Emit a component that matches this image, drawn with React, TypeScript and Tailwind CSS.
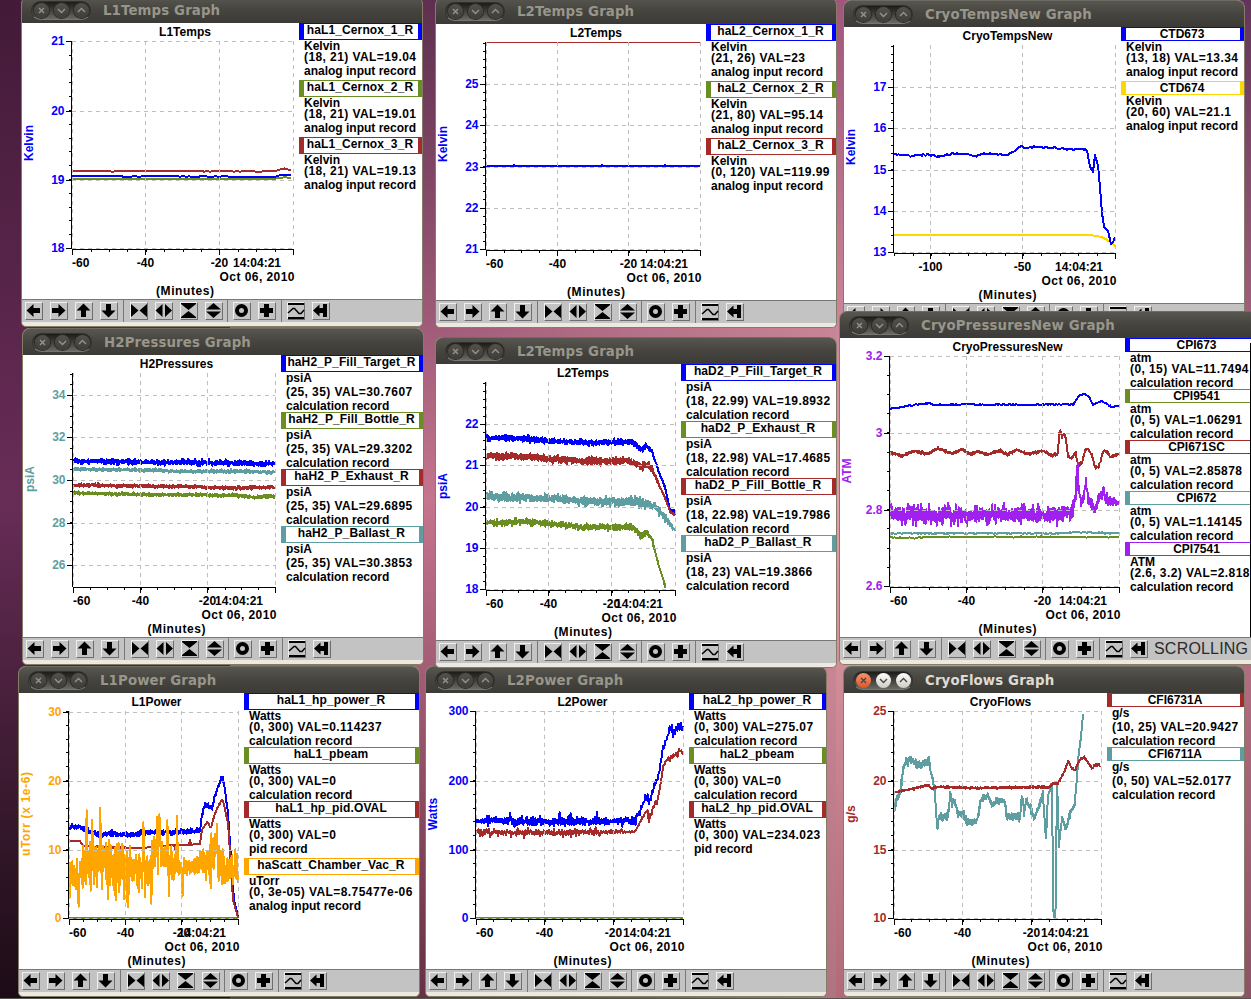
import React from "react";
import clsx from "clsx";

type Point = [number, number, number?];

type Series = {
  color: string;
  noise?: number;
  step?: number;
  width?: number;
  points: Point[];
  spikes?: [number, number][];
};

type Record_ = { name: string; color: string; unit: string; value: string; kind: string };

type GraphWindow = {
  title: string;
  name: string;
  x: number;
  y: number;
  width: number;
  height: number;
  active?: boolean;
  status?: string;
  legendX: number;
  center: number;
  axis: { left: number; right: number; top: number; bottom: number };
  yColor: string;
  yLabel: string;
  yLabelAt: number;
  yLabelLength?: number;
  yMinor: number;
  yTicks: [number, string][];
  xMinor: number;
  xTicks: [number, string][];
  records: Record_[];
  series: Series[];
};

const BLUE = "#0000ff";
const GREEN = "#6b8e23";
const RED = "#a52a2a";
const TEAL = "#5f9ea0";
const PURPLE = "#a020f0";
const ORANGE = "#ffa500";
const GOLD = "#ffd700";

const CALC = "calculation record";
const ANALOG = "analog input record";

const windows: GraphWindow[] = [
  {
    title: "L1Temps Graph",
    name: "L1Temps",
    x: 22, y: 23, width: 400, height: 276,
    legendX: 299,
    center: 185,
    axis: { left: 72, right: 293, top: 41, bottom: 249 },
    yColor: BLUE, yLabel: "Kelvin", yLabelAt: 143,
    yMinor: 13.8,
    yTicks: [[41, "21"], [111, "20"], [180, "19"], [248, "18"]],
    xMinor: 18.4,
    xTicks: [[72, "-60"], [145, "-40"], [219, "-20"]],
    records: [
      { name: "haL1_Cernox_1_R", color: BLUE, unit: "Kelvin", value: "(18, 21) VAL=19.04", kind: ANALOG },
      { name: "haL1_Cernox_2_R", color: GREEN, unit: "Kelvin", value: "(18, 21) VAL=19.01", kind: ANALOG },
      { name: "haL1_Cernox_3_R", color: RED, unit: "Kelvin", value: "(18, 21) VAL=19.13", kind: ANALOG },
    ],
    series: [
      { color: RED, noise: 0.5, step: 3, points: [[72, 171], [274, 171.3], [284, 168.8], [293, 170]] },
      { color: GREEN, noise: 0.2, step: 3, points: [[72, 179], [274, 179], [284, 177], [293, 178]] },
      { color: BLUE, noise: 0.4, step: 3, points: [[72, 176], [145, 176.3], [274, 177], [284, 174.5], [293, 175.7]] },
    ],
  },
  {
    title: "L2Temps Graph",
    name: "L2Temps",
    x: 436, y: 24, width: 400, height: 276,
    legendX: 706,
    center: 596,
    axis: { left: 486, right: 700, top: 42, bottom: 250 },
    yColor: BLUE, yLabel: "Kelvin", yLabelAt: 144,
    yMinor: 8.26,
    yTicks: [[84, "25"], [125, "24"], [167, "23"], [208, "22"], [249, "21"]],
    xMinor: 17.85,
    xTicks: [[486, "-60"], [557, "-40"], [628, "-20"]],
    records: [
      { name: "haL2_Cernox_1_R", color: BLUE, unit: "Kelvin", value: "(21, 26) VAL=23", kind: ANALOG },
      { name: "haL2_Cernox_2_R", color: GREEN, unit: "Kelvin", value: "(21, 80) VAL=95.14", kind: ANALOG },
      { name: "haL2_Cernox_3_R", color: RED, unit: "Kelvin", value: "(0, 120) VAL=119.99", kind: ANALOG },
    ],
    series: [
      { color: RED, width: 1, points: [[486, 42.5], [700, 42.5]] },
      { color: BLUE, points: [[486, 166], [513, 166], [514, 165], [515, 166], [601, 166], [602, 165], [603, 166], [664, 166], [665, 165], [666, 166], [700, 166]] },
    ],
  },
  {
    title: "CryoTempsNew Graph",
    name: "CryoTempsNew",
    x: 844, y: 27, width: 400, height: 276,
    legendX: 1121,
    center: 1007.5,
    axis: { left: 894, right: 1115, top: 45, bottom: 253 },
    yColor: BLUE, yLabel: "Kelvin", yLabelAt: 147,
    yMinor: 8.26,
    yTicks: [[87, "17"], [128, "16"], [170, "15"], [211, "14"], [252, "13"]],
    xMinor: 18.4,
    xTicks: [[930, "-100"], [1022, "-50"]],
    records: [
      { name: "CTD673", color: BLUE, unit: "Kelvin", value: "(13, 18) VAL=13.34", kind: ANALOG },
      { name: "CTD674", color: GOLD, unit: "Kelvin", value: "(20, 60) VAL=21.1", kind: ANALOG },
    ],
    series: [
      { color: GOLD, points: [[894, 235], [1092, 235], [1094, 236], [1101, 236.7], [1106, 239.3], [1111, 242.7], [1115, 246]] },
      {
        color: BLUE, noise: 0.8,
        points: [
          [894, 154], [910, 156], [928, 154.7], [940, 156.5], [952, 153.5], [968, 154.7], [977, 156.5], [983, 153.3],
          [995, 154], [1007, 155.7], [1015, 150], [1022, 146], [1026, 148.7], [1035, 146.7], [1055, 148], [1068, 149.3],
          [1082, 148.7], [1087, 150.7], [1090, 166.7, 0], [1093, 172, 0], [1095, 154.7, 0], [1098, 166, 0], [1100, 187, 0],
          [1102, 213, 0], [1104, 226.7, 0], [1108, 230.7, 0], [1111, 244, 0], [1113, 242, 0], [1115, 237, 0],
        ],
      },
    ],
  },
  {
    title: "H2Pressures Graph",
    name: "H2Pressures",
    x: 23, y: 355, width: 400, height: 282,
    legendX: 281,
    center: 176.5,
    axis: { left: 73, right: 275, top: 373, bottom: 587 },
    yColor: TEAL, yLabel: "psiA", yLabelAt: 479,
    yMinor: 10.63,
    yTicks: [[395, "34"], [437, "32"], [480, "30"], [523, "28"], [565, "26"]],
    xMinor: 16.8,
    xTicks: [[73, "-60"], [140, "-40"], [207, "-20"]],
    records: [
      { name: "haH2_P_Fill_Target_R", color: BLUE, unit: "psiA", value: "(25, 35) VAL=30.7607", kind: CALC },
      { name: "haH2_P_Fill_Bottle_R", color: GREEN, unit: "psiA", value: "(25, 35) VAL=29.3202", kind: CALC },
      { name: "haH2_P_Exhaust_R", color: RED, unit: "psiA", value: "(25, 35) VAL=29.6895", kind: CALC },
      { name: "haH2_P_Ballast_R", color: TEAL, unit: "psiA", value: "(25, 35) VAL=30.3853", kind: CALC },
    ],
    series: [
      { color: BLUE, noise: 3, step: 0.7, points: [[73, 461], [140, 462], [275, 463.5]] },
      { color: TEAL, noise: 1.8, step: 0.7, points: [[73, 469], [140, 470], [180, 471.3], [245, 471.3], [260, 472.3], [275, 471.7]] },
      { color: RED, noise: 1.8, step: 0.7, points: [[73, 485], [200, 487], [231, 488], [275, 487]] },
      { color: GREEN, noise: 1.7, step: 0.7, points: [[73, 493], [140, 494.5], [235, 495.3], [255, 497.5], [275, 495.7]] },
    ],
  },
  {
    title: "L2Power Graph",
    name: "L2Power",
    x: 426, y: 693, width: 400, height: 276,
    legendX: 689,
    center: 582.5,
    axis: { left: 476, right: 683, top: 711, bottom: 919 },
    yColor: BLUE, yLabel: "Watts", yLabelAt: 814,
    yMinor: 13.8,
    yTicks: [[711, "300"], [781, "200"], [850, "100"], [918, "0"]],
    xMinor: 17.25,
    xTicks: [[476, "-60"], [544, "-40"], [613, "-20"]],
    records: [
      { name: "haL2_hp_power_R", color: BLUE, unit: "Watts", value: "(0, 300) VAL=275.07", kind: CALC },
      { name: "haL2_pbeam", color: GREEN, unit: "Watts", value: "(0, 300) VAL=0", kind: CALC },
      { name: "haL2_hp_pid.OVAL", color: RED, unit: "Watts", value: "(0, 300) VAL=234.023", kind: "pid record" },
    ],
    series: [
      { color: GREEN, points: [[476, 918], [683, 918]] },
      {
        color: BLUE, noise: 5, step: 1.1,
        points: [
          [476, 820.7, 2], [490, 820.7], [550, 822], [635, 820.7], [642, 806.7], [647, 795], [649, 805], [653, 790], [658, 778], [661, 760],
          [663, 746.7], [667, 738.3], [670, 726], [673, 734], [678, 728.3], [683, 727],
        ],
        spikes: [[510, 813], [559, 812], [570, 813], [596, 812]],
      },
      {
        color: RED, noise: 4.2, step: 1.3,
        points: [
          [476, 831.5], [520, 833], [600, 832], [635, 831.7, 1], [642, 818.3, 2], [647, 810, 2], [649, 818.3], [653, 808.3], [658, 798.3],
          [661, 781, 1], [663, 766.7, 2], [667, 759, 2], [673, 756.7], [680, 750.3], [683, 755, 1],
        ],
      },
    ],
  },
  {
    title: "L2Temps Graph",
    name: "L2Temps",
    x: 436, y: 364, width: 400, height: 276,
    legendX: 681,
    center: 583,
    axis: { left: 486, right: 675, top: 382, bottom: 590 },
    yColor: BLUE, yLabel: "psiA", yLabelAt: 486,
    yMinor: 8.26,
    yTicks: [[424, "22"], [465, "21"], [507, "20"], [548, "19"], [589, "18"]],
    xMinor: 15.75,
    xTicks: [[486, "-60"], [548, "-40"], [611, "-20"]],
    records: [
      { name: "haD2_P_Fill_Target_R", color: BLUE, unit: "psiA", value: "(18, 22.99) VAL=19.8932", kind: CALC },
      { name: "haD2_P_Exhaust_R", color: GREEN, unit: "psiA", value: "(18, 22.98) VAL=17.4685", kind: CALC },
      { name: "haD2_P_Fill_Bottle_R", color: RED, unit: "psiA", value: "(18, 22.98) VAL=19.7986", kind: CALC },
      { name: "haD2_P_Ballast_R", color: TEAL, unit: "psiA", value: "(18, 23) VAL=19.3866", kind: CALC },
    ],
    series: [
      {
        color: BLUE, noise: 3.2, step: 0.6,
        points: [[486, 438], [525, 438.5], [548, 441.3], [585, 442.5], [632, 442], [642, 450], [646, 446], [652, 451, 1.5], [658, 470, 1.5], [665, 487, 1.5], [670, 510, 1], [675, 511, 1]],
      },
      {
        color: RED, noise: 4, step: 0.6,
        points: [[486, 455.7], [525, 456.5], [548, 459], [585, 461], [628, 461], [642, 467], [646, 463.5], [652, 469], [660, 487, 1.5], [666, 500, 1.5], [670, 511.7, 1], [675, 515, 1]],
      },
      {
        color: TEAL, noise: 5, step: 0.6,
        points: [[486, 497], [550, 498], [585, 501], [638, 501.7], [655, 506], [665, 517], [675, 530.7, 1]],
      },
      {
        color: GREEN, noise: 3.4, step: 0.6,
        points: [[486, 522.7], [525, 521.7], [548, 523.3], [582, 527.3], [632, 526.5], [642, 536.5], [646, 531.5], [652, 539], [658, 563, 1.5], [666, 588, 1.5]],
      },
    ],
  },
  {
    title: "CryoPressuresNew Graph",
    name: "CryoPressuresNew",
    x: 840, y: 338, width: 429, height: 299,
    status: "SCROLLING",
    legendX: 1125,
    center: 1007.5,
    axis: { left: 890, right: 1119, top: 356, bottom: 587 },
    yColor: PURPLE, yLabel: "ATM", yLabelAt: 471,
    yMinor: 19.2,
    yTicks: [[356, "3.2"], [433, "3"], [510, "2.8"], [586, "2.6"]],
    xMinor: 19.05,
    xTicks: [[890, "-60"], [966, "-40"], [1042, "-20"]],
    records: [
      { name: "CPI673", color: BLUE, unit: "atm", value: "(0, 15) VAL=11.7494", kind: CALC },
      { name: "CPI9541", color: GREEN, unit: "atm", value: "(0, 5) VAL=1.06291", kind: CALC },
      { name: "CPI671SC", color: RED, unit: "atm", value: "(0, 5) VAL=2.85878", kind: CALC },
      { name: "CPI672", color: TEAL, unit: "atm", value: "(0, 5) VAL=1.14145", kind: CALC },
      { name: "CPI7541", color: PURPLE, unit: "ATM", value: "(2.6, 3.2) VAL=2.818", kind: CALC },
    ],
    series: [
      {
        color: BLUE, noise: 0.7,
        points: [[890, 409], [918, 404.3], [928, 403.3], [935, 404.7], [1073, 404.7], [1080, 395], [1084, 393.3], [1088, 395.5], [1093, 404.7], [1098, 402], [1102, 401], [1108, 404.5], [1112, 407.7], [1119, 405.3]],
      },
      {
        color: RED, noise: 1.5, step: 0.8,
        points: [
          [890, 452.3], [903, 456], [913, 451], [928, 453.7], [938, 448.3], [952, 453.7], [962, 449.3], [970, 454.3], [978, 451],
          [987, 454.7], [1000, 450.3], [1007, 454.7], [1017, 449.7], [1027, 454], [1043, 450.7], [1052, 455], [1058, 453.7],
          [1059, 435], [1060.7, 428.3], [1061.7, 438.3], [1064, 433.7], [1066, 439], [1068, 456.7], [1072, 458.3], [1075.5, 451.7],
          [1078, 464], [1082, 463.3], [1085.5, 449], [1088, 449], [1092, 455], [1095, 467.7], [1099, 466.7], [1103, 451.7],
          [1106, 450.7], [1110, 457], [1119, 453.7],
        ],
      },
      { color: TEAL, noise: 0.7, points: [[890, 533.3], [1060, 533.3], [1075, 532.3], [1090, 532.3], [1100, 533], [1119, 533]] },
      { color: GREEN, noise: 0.6, points: [[890, 537.5], [915, 538], [925, 537], [1119, 537]] },
      {
        color: PURPLE, noise: 9.5, step: 0.7,
        points: [
          [890, 515], [1050, 515], [1060, 514], [1073, 511], [1075, 500], [1077, 475], [1079, 490], [1081, 503, 5], [1084, 497, 5],
          [1086, 480, 5], [1088, 500, 5], [1094, 510, 6], [1097, 505, 6], [1101, 494, 6], [1106, 499, 6], [1113, 501, 6], [1119, 504, 4],
        ],
        spikes: [[905, 525], [948, 503], [967, 526], [1004, 503], [1057, 526], [1077, 463], [1085.6, 478], [1103, 487]],
      },
    ],
  },
  {
    title: "L1Power Graph",
    name: "L1Power",
    x: 19, y: 693, width: 400, height: 276,
    legendX: 244,
    center: 156.5,
    axis: { left: 69, right: 238, top: 711, bottom: 919 },
    yColor: ORANGE, yLabel: "uTorr (x 1e-6)", yLabelAt: 814, yLabelLength: 84,
    yMinor: 13.8,
    yTicks: [[712, "30"], [781, "20"], [850, "10"], [918, "0"]],
    xMinor: 14.1,
    xTicks: [[69, "-60"], [125, "-40"], [181, "-20"]],
    records: [
      { name: "haL1_hp_power_R", color: BLUE, unit: "Watts", value: "(0, 300) VAL=0.114237", kind: CALC },
      { name: "haL1_pbeam", color: GREEN, unit: "Watts", value: "(0, 300) VAL=0", kind: CALC },
      { name: "haL1_hp_pid.OVAL", color: RED, unit: "Watts", value: "(0, 300) VAL=0", kind: "pid record" },
      { name: "haScatt_Chamber_Vac_R", color: ORANGE, unit: "uTorr", value: "(0, 3e-05) VAL=8.75477e-06", kind: ANALOG },
    ],
    series: [
      { color: GREEN, points: [[69, 918], [238, 918]] },
      {
        color: BLUE, noise: 3, step: 0.8,
        points: [
          [69, 827], [80, 827], [97, 835], [110, 833.3], [127, 835], [147, 832.7], [180, 831.7], [200, 830.7], [202, 815], [205, 805],
          [208, 805], [212, 809], [215, 795], [218, 788.3], [222, 775], [224, 783.3], [228, 813.3, 1], [232, 873.3, 1], [234, 900, 1], [238, 917, 1],
        ],
      },
      {
        color: RED, noise: 1.2,
        points: [
          [69, 840.7, 0], [80, 841, 0], [83, 846, 0], [110, 847.3], [133, 848, 0], [152, 847.3, 0], [157, 845.7, 0], [189, 845, 0], [200, 843.7, 0], [202, 830],
          [207, 821.7], [211, 828], [215, 813.3], [218, 806.7], [222, 799.3], [224, 805], [228, 823.3], [231, 866.7], [233, 900], [238, 917.3],
        ],
        spikes: [[175, 849], [190, 840]],
      },
      {
        color: ORANGE, noise: 24, step: 0.8,
        points: [
          [69, 879, 18], [76, 874, 22], [82, 868, 30], [95, 868, 32], [110, 862, 34], [125, 867, 32], [132, 869, 24], [140, 868, 24], [150, 868, 24],
          [154, 850, 28], [160, 845, 26], [164, 862, 14], [170, 868, 20], [178, 867, 12], [186, 867, 12], [197, 866, 10], [203, 862, 12], [207, 865, 18],
          [211, 860, 26], [215, 850, 30], [220, 866, 28], [228, 872, 20], [238, 868, 22],
        ],
        spikes: [[78, 907], [86, 810], [92, 820], [100, 808], [128, 907], [143, 822], [151, 904], [157, 817], [159, 814], [167, 820], [169, 896], [176.5, 816], [182, 896], [216.5, 824]],
      },
    ],
  },
  {
    title: "CryoFlows Graph",
    name: "CryoFlows",
    x: 844, y: 693, width: 400, height: 276,
    active: true,
    legendX: 1107,
    center: 1000.5,
    axis: { left: 894, right: 1101, top: 711, bottom: 919 },
    yColor: RED, yLabel: "g/s", yLabelAt: 814,
    yMinor: 13.8,
    yTicks: [[711, "25"], [781, "20"], [850, "15"], [918, "10"]],
    xMinor: 17.25,
    xTicks: [[894, "-60"], [962, "-40"], [1031, "-20"]],
    records: [
      { name: "CFI6731A", color: RED, unit: "g/s", value: "(10, 25) VAL=20.9427", kind: CALC },
      { name: "CFI6711A", color: TEAL, unit: "g/s", value: "(0, 50) VAL=52.0177", kind: CALC },
    ],
    series: [
      {
        color: TEAL, noise: 4.3, step: 0.6,
        points: [
          [894, 807], [900, 793], [904, 765], [910, 759], [918, 766], [925, 763.3], [929, 761], [932, 776.7], [935, 793.3], [937.3, 831, 1],
          [939, 817], [947, 817], [949, 808], [950.3, 792, 1], [952, 801.7], [955, 801.7], [958, 815], [963, 814], [967.5, 822],
          [977, 821], [981, 800], [988, 795], [992, 806], [998, 800], [1005, 801.7], [1006.3, 817], [1020, 816.7], [1022, 793.3, 1],
          [1024, 813], [1026, 800], [1030, 806.7], [1034, 820], [1039, 806.7], [1043, 793], [1046, 840, 1], [1048, 795, 2], [1052, 784],
          [1053.3, 917, 0], [1055.6, 917, 0], [1057, 778.3, 0], [1059, 846, 2], [1062, 818], [1065.5, 829], [1070, 813], [1074.5, 804],
          [1077, 780, 1], [1078.3, 757, 1], [1081, 736.7, 1], [1083.2, 712, 0],
        ],
      },
      {
        color: RED, noise: 1.2, step: 0.8,
        points: [
          [894, 792.3], [902, 791], [928, 785.3], [932, 788.7], [937, 786.7], [968, 788], [1045, 787], [1048, 788], [1053, 783.3],
          [1058, 783.3], [1062, 776], [1065, 770], [1068, 760.7], [1072, 768.3], [1075, 770.7], [1079, 760.7], [1084, 756.7],
          [1087, 761.7], [1092, 768.3], [1096, 764.5], [1101, 766],
        ],
      },
    ],
  },
];

// small seeded generator so the traces look the same on every render
function random(seed: number) {
  let s = seed;
  return () => {
    s = (s * 1664525 + 1013904223) % 4294967296;
    return s / 4294967296;
  };
}

function buildTrace({ points, noise = 0, step = 1, spikes = [] }: Series, seed: number) {
  if (!noise) return points.map(([px, py]) => `${px},${py}`).join(" ");
  const next = random(seed);
  const out: [number, number][] = [];
  let i = 0;
  let sign = 1;
  const end = points[points.length - 1][0];
  for (let px = points[0][0]; px <= end + 0.01; px += step) {
    while (i < points.length - 2 && px > points[i + 1][0]) i++;
    const [x1, y1, n1 = noise] = points[i];
    const [x2, y2, n2 = noise] = points[i + 1];
    const t = (px - x1) / (x2 - x1);
    const amp = n1 + (n2 - n1) * t;
    let r = next() * 2 - 1;
    // swing from side to side so that a noisy channel fills its band
    if (noise > 1) {
      sign = -sign;
      const swing = Math.abs(r);
      r = sign * (next() > 0.75 ? 0.45 + swing * 0.75 : 0.1 + swing * 0.65);
    }
    out.push([px, y1 + (y2 - y1) * t + r * amp]);
  }
  spikes.forEach(([sx, sy]) => {
    const at = out.findIndex(([px]) => px >= sx);
    if (at > 0) out[at] = [out[at][0], sy];
  });
  return out.map(([px, py]) => `${px.toFixed(1)},${py.toFixed(1)}`).join(" ");
}

function Chart({ win }: { win: GraphWindow }) {
  const { axis, center } = win;
  const width = win.legendX - win.x;
  const minorY: number[] = [];
  const lastY = win.yTicks[win.yTicks.length - 1][0];
  for (let y = lastY; y >= axis.top; y -= win.yMinor) minorY.push(Math.round(y));
  const minorX: number[] = [];
  for (let x = axis.right; x >= axis.left - 1; x -= win.xMinor) minorX.push(Math.round(x));
  const labelX = win.x + 11;

  return (
    <svg
      className="flex-none font-['Liberation_Sans'] text-[12px] font-bold"
      width={width}
      height={win.height}
      viewBox={`${win.x} ${win.y} ${width} ${win.height}`}
    >
      <text x={center} y={win.y + 13} textAnchor="middle">{win.name}</text>
      <text
        x={labelX}
        y={win.yLabelAt}
        fill={win.yColor}
        textAnchor="middle"
        textLength={win.yLabelLength}
        transform={`rotate(-90 ${labelX} ${win.yLabelAt})`}
      >
        {win.yLabel}
      </text>
      <g fill="none" strokeLinejoin="round" shapeRendering="crispEdges">
        {win.series.map((s, i) => (
          <polyline key={i} stroke={s.color} strokeWidth={s.width ?? 2} points={buildTrace(s, win.x * 31 + win.y + i * 97)} />
        ))}
      </g>
      <g stroke="#bebebe" strokeDasharray="4 4" shapeRendering="crispEdges">
        {win.yTicks.map(([y]) => (
          <line key={y} x1={axis.left} x2={axis.right} y1={y + 0.5} y2={y + 0.5} />
        ))}
        {win.xTicks.map(([x]) => (
          <line key={x} x1={x + 0.5} x2={x + 0.5} y1={axis.top} y2={axis.bottom} />
        ))}
        <line x1={axis.right + 0.5} x2={axis.right + 0.5} y1={axis.top} y2={axis.bottom} />
      </g>
      <g stroke="#000" shapeRendering="crispEdges">
        <line x1={axis.left - 0.5} x2={axis.left - 0.5} y1={axis.top} y2={axis.bottom} />
        <line x1={axis.left} x2={axis.right + 1} y1={axis.bottom + 0.5} y2={axis.bottom + 0.5} />
        {minorY.map((y) => (
          <line key={y} x1={axis.left - 3} x2={axis.left} y1={y + 0.5} y2={y + 0.5} />
        ))}
        {win.yTicks.map(([y]) => (
          <line key={y} x1={axis.left - 6} x2={axis.left} y1={y + 0.5} y2={y + 0.5} />
        ))}
        {minorX.map((x) => (
          <line key={x} x1={x + 0.5} x2={x + 0.5} y1={axis.bottom} y2={axis.bottom + 3} />
        ))}
        {[...win.xTicks.map(([x]) => x), axis.right].map((x) => (
          <line key={x} x1={x + 0.5} x2={x + 0.5} y1={axis.bottom} y2={axis.bottom + 6} />
        ))}
      </g>
      {win.yTicks.map(([y, label]) => (
        <text key={y} x={axis.left - 7.5} y={y + 4} fill={win.yColor} textAnchor="end">{label}</text>
      ))}
      {win.xTicks.map(([x, label]) => (
        <text key={x} x={x === axis.left ? x : x + 0.5} y={axis.bottom + 18} textAnchor={x === axis.left ? "start" : "middle"}>
          {label}
        </text>
      ))}
      <text x={axis.right - 12} y={axis.bottom + 18} textAnchor="end">14:04:21</text>
      <text x={axis.right - 73.5} y={axis.bottom + 32} textLength={75}>Oct 06, 2010</text>
      <text x={center - 29} y={axis.bottom + 46} textLength={58}>(Minutes)</text>
    </svg>
  );
}

// lines with descenders take three more pixels
const hasDescender = (text: string) => /[gjpqy(),_]/.test(text);

function LegendLine({ text, className }: { text: string; className?: string }) {
  return (
    <div className={clsx("pl-[5px] leading-[12px] whitespace-pre", hasDescender(text) ? "h-[14px]" : "h-[11px]", className)}>
      {text}
    </div>
  );
}

function Legend({ win }: { win: GraphWindow }) {
  return (
    <div className="flex-1 font-['Liberation_Sans'] text-[12px] font-bold text-black">
      {win.records.map((r) => (
        <div key={r.name} className="mb-px">
          <div
            className={clsx(
              "flex justify-center border-y border-l-[5px] border-r-[4px] pr-[2px] leading-[12px] whitespace-nowrap",
              hasDescender(r.name) ? "h-[17px] tracking-[0.12px]" : "h-[14px]"
            )}
            style={{ borderColor: r.color }}
          >
            {r.name}
          </div>
          <LegendLine text={r.unit} />
          <LegendLine text={r.value} className="tracking-[0.42px]" />
          <LegendLine text={r.kind} />
        </div>
      ))}
    </div>
  );
}

const icons: Record<string, React.ReactNode> = {
  left: <path d="M1.500 8.500 8.500 2v4H15v5H8.500v4z" />,
  right: <path d="M15.500 8.500 8.500 2v4H2v5h6.500v4z" />,
  up: <path d="M8.500 1.500 15.500 8.500H11V15H6V8.500H1.500z" />,
  down: <path d="M8.500 15.500 1.500 8.500H6V2h5v6.500h4.500z" />,
  shrinkX: <path d="M1 2v13l7.500-6.500zM17 2v13L9.500 8.500z" />,
  growX: <path d="M7.500 2v13L.5 8.500zM10 2v13l7-6.500z" />,
  shrinkY: <path d="M1 1h15v1L8.500 8 1 2zM1 16h15v-1L8.500 9 1 15z" />,
  growY: <path d="M1 7.500h15L8.500 1zM1 9.500h15L8.500 16z" />,
  ring: <circle cx="8.500" cy="8.500" r="4.500" fill="none" stroke="#000" strokeWidth="4" />,
  plus: <path d="M6 2h5v4h4v5h-4v4H6v-4H2V6h4z" />,
  wave: (
    <>
      <path d="M1 1h16v2H1zM1 15h16v2H1z" shapeRendering="crispEdges" />
      <path d="M1 11 6 6.500h1.500L12 11.500h2L17 8" fill="none" stroke="#000" strokeWidth="1.500" />
    </>
  ),
  reset: <path d="M1 8.500 7.500 2.500V6H11V2h4v13h-4v-4H7.500v3.500z" />,
};

const toolGroups = [
  { tools: ["left", "right", "up", "down"], className: "pl-[3px] pr-[5px]" },
  { tools: ["shrinkX", "growX", "shrinkY", "growY"], className: "pl-[6px] pr-[4px]" },
  { tools: ["ring", "plus"], className: "pl-[5px] pr-[5px]" },
  { tools: ["wave", "reset"], className: "pl-[5px]" },
];

function Toolbar({ status }: { status?: string }) {
  return (
    <div className="flex h-[23px] border-t border-[#777] bg-[#c3c3c3]">
      {toolGroups.map((group, i) => (
        <div
          key={i}
          className={clsx("flex gap-[7px] pt-[2px]", group.className, i < toolGroups.length - 1 && "border-r border-[#777]")}
        >
          {group.tools.map((tool) => (
            <button key={tool} className="h-[18px] w-[18px] border border-t-[#f0f0f0] border-l-[#f0f0f0] border-r-[#6e6e6e] border-b-[#6e6e6e]">
              <svg className="-mt-px -ml-px block" width="18" height="18" viewBox="0 0 18 18">{icons[tool]}</svg>
            </button>
          ))}
        </div>
      ))}
      {status && (
        <span className="pt-px pl-[6px] font-['Liberation_Sans'] text-[16px] leading-[20px] tracking-[0.2px] text-[#2a2a2a]">{status}</span>
      )}
    </div>
  );
}

const glyphs = ["M5 5l5 5M10 5l-5 5", "M4 6l3.500 3.500L11 6", "M4 9l3.500-3.500L11 9"];

function TitleBar({ title, active }: { title: string; active?: boolean }) {
  return (
    <div className="flex h-[27px] items-start rounded-t-[7px] border-t border-[#6d6c64] bg-linear-to-b from-[#57564f] via-[#45443f] to-[#3b3a36]">
      <div className="mt-[4px] ml-[9px] flex h-[19px] w-[60px] items-center gap-[5px] rounded-full border border-[#33322e] border-b-[#77766f] bg-linear-to-b from-[#1d1c19] to-[#6a6962] pl-[1.500px]">
        {glyphs.map((d, i) => (
          <span
            key={i}
            className={clsx(
              "h-[15px] w-[15px] flex-none rounded-full",
              !active && "bg-linear-to-b from-[#52514b] to-[#3e3d39] ring-1 ring-[#2b2a27]",
              active && i === 0 && "bg-linear-to-b from-[#f4936a] to-[#df5426]",
              active && i > 0 && "bg-linear-to-b from-white to-[#cfccc5]"
            )}
          >
            <svg width="15" height="15" viewBox="0 0 15 15" fill="none" strokeWidth="1.400" stroke={active ? "#4b4640" : "#96948a"}>
              <path d={d} />
            </svg>
          </span>
        ))}
      </div>
      <h1
        className={clsx(
          "mt-[5px] ml-[12px] font-['DejaVu_Sans'] text-[13.330px] leading-[18px] font-bold tracking-[0.12px] whitespace-nowrap",
          active ? "text-[#dfdbd2]" : "text-[#98958a]"
        )}
      >
        {title}
      </h1>
    </div>
  );
}

function Window({ win }: { win: GraphWindow }) {
  return (
    <section
      className="absolute rounded-t-[8px] rounded-b-[5px] border-x border-b border-[#857c68] bg-[#ede8e0]"
      style={{ left: win.x - 1, top: win.y - 27, width: win.width + 2 }}
    >
      <TitleBar title={win.title} active={win.active} />
      <div className="flex overflow-hidden bg-white" style={{ height: win.height }}>
        <Chart win={win} />
        <Legend win={win} />
      </div>
      <Toolbar status={win.status} />
      <div className="h-[4px]" />
    </section>
  );
}

function App() {
  return (
    <main className="relative h-[999px] w-[1251px] overflow-hidden bg-[#b9708a]">
      <div className="flex h-full">
        <div className="w-[230px] bg-linear-to-b from-[#431a38] via-[#682d57] to-[#1c0c16]" />
        <div className="w-[606px] bg-linear-to-b from-[#5e2f50] via-[#c5758e] to-[#653145]">
          <div className="ml-[210px] h-full bg-linear-to-r from-transparent to-[#e2a0aa]/60" />
        </div>
        <div className="w-[204px] bg-linear-to-b from-[#a0567a] via-[#e2a0aa] to-[#b06a78]" />
        <div className="flex-1 bg-linear-to-b from-[#63345a] via-[#c67a90] to-[#8c5266]" />
      </div>
      {windows.map((win) => (
        <Window key={win.title + win.y} win={win} />
      ))}
      {/* window edge at the right side of the screen and the panel below */}
      <div className="absolute top-[343px] right-0 h-[294px] w-px bg-black" />
      <div className="absolute bottom-0 left-0 h-px w-full bg-[#55544e]" />
    </main>
  );
}

export default App;
